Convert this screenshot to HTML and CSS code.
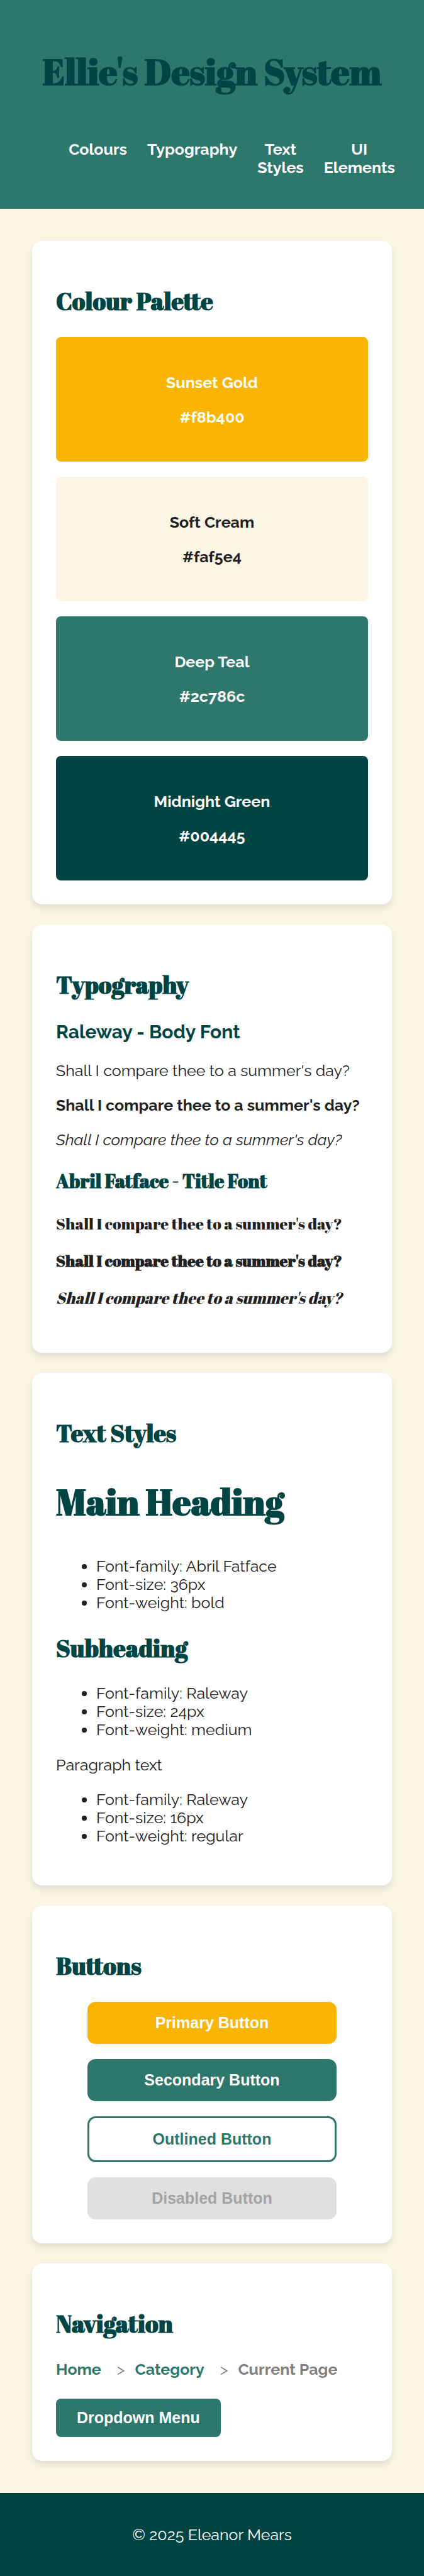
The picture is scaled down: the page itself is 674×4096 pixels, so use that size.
FILE: index.html
```html
<!DOCTYPE html>
<html lang="en">
<head>
<meta charset="utf-8">
<meta name="viewport" content="width=device-width, initial-scale=1">
<title>Ellie's Design System</title>
<link rel="stylesheet" href="styles.css">
</head>
<body>
<header class="site-header">
  <h1 class="title">Ellie's Design System</h1>
  <nav aria-label="Sections">
    <ul class="site-nav">
      <li><a href="#colours">Colours</a></li>
      <li><a href="#typography">Typography</a></li>
      <li><a href="#text-styles">Text Styles</a></li>
      <li><a href="#ui-elements">UI Elements</a></li>
    </ul>
  </nav>
</header>

<main class="content">
  <section class="card" id="colours">
    <h2 class="heading">Colour Palette</h2>
    <div class="palette">
      <div class="swatch swatch-gold"><p>Sunset Gold</p><p>#f8b400</p></div>
      <div class="swatch swatch-cream"><p>Soft Cream</p><p>#faf5e4</p></div>
      <div class="swatch swatch-teal"><p>Deep Teal</p><p>#2c786c</p></div>
      <div class="swatch swatch-midnight"><p>Midnight Green</p><p>#004445</p></div>
    </div>
  </section>

  <section class="card" id="typography">
    <h2 class="heading">Typography</h2>
    <div class="samples">
      <h3 class="sample-heading">Raleway - Body Font</h3>
      <p>Shall I compare thee to a summer's day?</p>
      <p class="bold">Shall I compare thee to a summer's day?</p>
      <p class="italic">Shall I compare thee to a summer's day?</p>
      <h3 class="sample-heading display-heading">Abril Fatface - Title Font</h3>
      <p class="display">Shall I compare thee to a summer's day?</p>
      <p class="display bold">Shall I compare thee to a summer's day?</p>
      <p class="display italic">Shall I compare thee to a summer's day?</p>
    </div>
  </section>

  <section class="card" id="text-styles">
    <h2 class="heading">Text Styles</h2>
    <h1 class="title">Main Heading</h1>
    <ul class="specs">
      <li>Font-family: Abril Fatface</li>
      <li>Font-size: 36px</li>
      <li>Font-weight: bold</li>
    </ul>
    <h2 class="heading">Subheading</h2>
    <ul class="specs">
      <li>Font-family: Raleway</li>
      <li>Font-size: 24px</li>
      <li>Font-weight: medium</li>
    </ul>
    <p>Paragraph text</p>
    <ul class="specs">
      <li>Font-family: Raleway</li>
      <li>Font-size: 16px</li>
      <li>Font-weight: regular</li>
    </ul>
  </section>

  <section class="card" id="ui-elements">
    <h2 class="heading">Buttons</h2>
    <div class="buttons">
      <button type="button" class="btn btn-primary">Primary Button</button>
      <button type="button" class="btn btn-secondary">Secondary Button</button>
      <button type="button" class="btn btn-outlined">Outlined Button</button>
      <button type="button" class="btn btn-disabled" disabled>Disabled Button</button>
    </div>
  </section>

  <section class="card">
    <h2 class="heading">Navigation</h2>
    <nav aria-label="Breadcrumb">
      <ol class="breadcrumb">
        <li><a href="#home">Home</a></li>
        <li><a href="#category">Category</a></li>
        <li class="current" aria-current="page"><span>Current Page</span></li>
      </ol>
    </nav>
    <button type="button" class="dropdown" aria-haspopup="menu">Dropdown Menu</button>
  </section>
</main>

<footer class="site-footer">
  <p>© 2025 Eleanor Mears</p>
</footer>
</body>
</html>
```
FILE: styles.css
```css
:root {
  --gold: #fab403;
  --cream: #fbf5e4;
  --teal: #2e776c;
  --midnight: #004444;
  --ink: #212121;
  --body: Raleway, Lato, sans-serif;
  --display: "Abril Fatface", "Liberation Serif", serif;
  --ui: "Liberation Sans", Arial, sans-serif;
}

* { box-sizing: border-box; }

body {
  margin: 0;
  background: var(--cream);
  color: var(--ink);
  font: 25px/30px var(--body);
}

p { margin: 25px 0; }
a { color: inherit; text-decoration: none; }

.title,
.heading {
  color: var(--midnight);
  font-family: var(--display);
  font-weight: 700;
}

.title {
  margin: 43px 0 49px;
  font-size: 57px;
  line-height: 78px;
}

.heading {
  margin: 31px 0 30px;
  font-size: 38px;
  line-height: 54px;
}

.site-header {
  display: flex;
  flex-direction: column;
  padding: 32px 32px 51px;
  background: var(--teal);
  text-align: center;
}

.site-nav {
  display: flex;
  justify-content: center;
  gap: 32px;
  margin: 21px 0 0;
  padding: 0 0 0 63px;
  list-style: none;
  color: #fff;
  font-weight: 700;
  line-height: 29px;
}

.site-nav li { width: min-content; }

.content {
  display: flex;
  flex-direction: column;
  gap: 32px;
  padding: 51px;
}

.card {
  display: flow-root;
  padding: 38px;
  border-radius: 16px;
  background: #fff;
  box-shadow: 0 6px 10px rgba(0, 68, 68, 0.12);
}

.palette { display: grid; gap: 24px; }

.swatch {
  display: grid;
  gap: 25px;
  padding: 57px 24px 56px;
  border-radius: 8px;
  color: #fff;
  font-weight: 700;
  text-align: center;
}

.swatch p { margin: 0; }
.swatch-gold { background: var(--gold); }
.swatch-cream { background: var(--cream); color: var(--ink); }
.swatch-teal { background: var(--teal); }
.swatch-midnight { background: var(--midnight); }

.samples { margin-bottom: 32px; }

.sample-heading {
  margin: 28px 0;
  color: var(--midnight);
  font-size: 30px;
  line-height: 36px;
}

.display-heading {
  font-family: var(--display);
  line-height: 46px;
}

.display {
  font-family: var(--display);
  line-height: 34px;
}

.bold { font-weight: 700; }
.italic { font-style: italic; }

.specs {
  margin: 26px 0;
  padding-left: 64px;
  line-height: 29px;
}

.buttons {
  display: flex;
  flex-direction: column;
  align-items: center;
  gap: 24px;
}

.btn,
.dropdown {
  border: 0;
  color: #fff;
  font: 700 25px/29px var(--ui);
}

.btn {
  width: 80%;
  padding: 19px 32px;
  border-radius: 13px;
}

.btn-primary { background: var(--gold); }
.btn-secondary { background: var(--teal); }

.btn-outlined {
  border: 3px solid var(--teal);
  background: transparent;
  color: var(--teal);
}

.btn-disabled { background: #e0e0e0; color: #a3a3a3; }

.breadcrumb {
  display: flex;
  margin: 0 0 32px;
  padding: 0;
  list-style: none;
  color: var(--teal);
  font-weight: 700;
}

.breadcrumb li + li::before {
  content: ">";
  margin: 0 16px 0 25px;
  color: #808080;
  font-weight: 400;
}

.breadcrumb .current { color: #808080; }

.dropdown {
  padding: 16px 33px;
  border-radius: 8px;
  background: var(--teal);
}

.site-footer {
  padding: 51px 32px;
  background: var(--midnight);
  color: #fff;
  text-align: center;
}

.site-footer p { margin: 0; }
```
